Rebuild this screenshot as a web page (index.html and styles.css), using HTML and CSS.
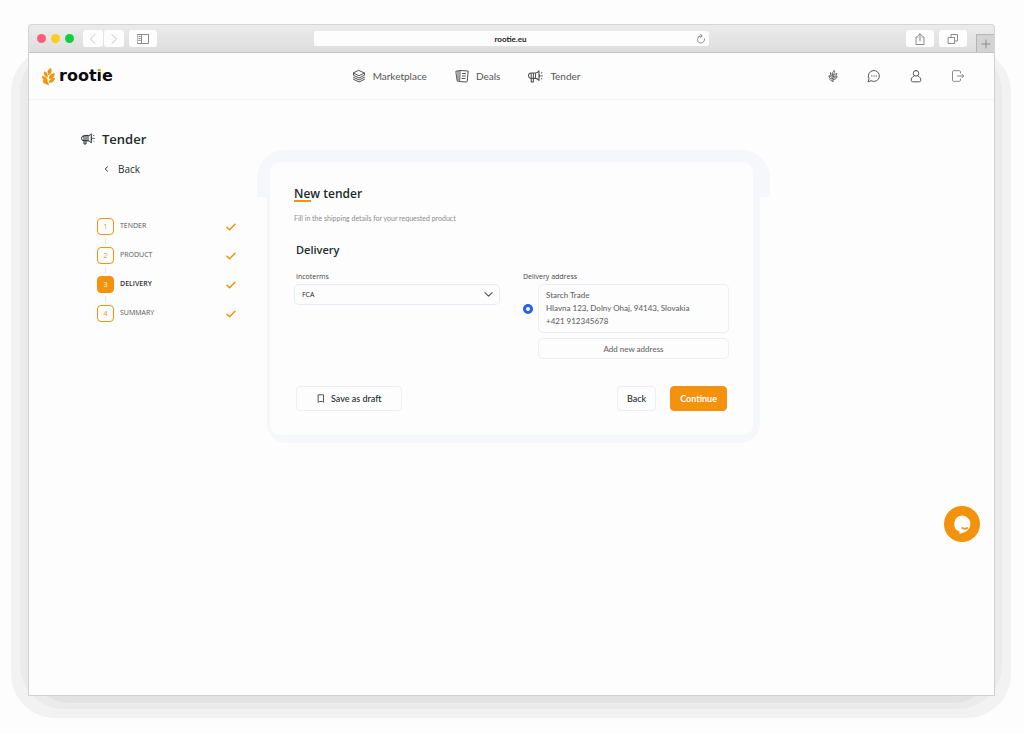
FILE: index.html
```html
<!DOCTYPE html>
<html lang="en">
<head>
<meta charset="utf-8">
<meta name="viewport" content="width=device-width, initial-scale=1">
<title>rootie – New tender</title>
<link rel="stylesheet" href="styles.css">
</head>
<body>
<svg class="defs" aria-hidden="true">
  <symbol id="megaphone" viewBox="0 0 28 24">
    <path d="M14 5.500v10H6a5 5 0 0 1 0-10zM6 5.500V22h4V5.500M14 5.500c3 0 5-2 6.500-4v18c-1.500-2-3.500-4-6.500-4M21 8.500a2.500 2.500 0 0 1 0 4.500M25 5.500l.5-.5M25.500 10.800h1M25 16l.5.500"/>
  </symbol>
  <symbol id="check" viewBox="0 0 10 8"><path d="M1 4.200l2.600 2.600L9 1.200"/></symbol>
</svg>
<div class="window">
  <div class="titlebar">
    <div class="tools">
      <span class="light red"></span><span class="light yellow"></span><span class="light green"></span>
      <div class="pair">
        <button class="tool" aria-label="Previous page"><svg class="pale" viewBox="0 0 12 12"><path d="M8 1.500L3.500 6 8 10.500"/></svg></button>
        <button class="tool" aria-label="Next page"><svg class="pale" viewBox="0 0 12 12"><path d="M4 1.500L8.500 6 4 10.500"/></svg></button>
      </div>
      <button class="tool wide" aria-label="Sidebar"><svg viewBox="0 0 12 12"><path d="M.5 1.500h11v9H.5zM4.500 1.500v9M1.800 3.500h1.400M1.800 5.500h1.400M1.800 7.500h1.400"/></svg></button>
    </div>
    <div class="url"><input type="text" value="rootie.eu" aria-label="Address" readonly><button class="reload" aria-label="Reload"><svg viewBox="0 0 12 12"><path d="M10.200 5.800A4.200 4.200 0 1 1 6 2.300h1M5.500.5L7.300 2.300 5.500 4.200"/></svg></button></div>
    <div class="tools end">
      <button class="tool wide" aria-label="Share"><svg viewBox="0 0 12 12"><path d="M4 4H2v7.500h8V4H8M6 8V.8M4 2.800l2-2 2 2"/></svg></button>
      <button class="tool wide" aria-label="Tabs"><svg viewBox="0 0 12 12"><path d="M1.500 4.500h6v6h-6zM4 4.500v-3h6.500V8h-3"/></svg></button>
      <button class="newtab" aria-label="New tab"><svg viewBox="0 0 12 12"><path d="M6 2v8M2 6h8"/></svg></button>
    </div>
  </div>

  <header class="header">
    <a class="logo" href="#">
      <svg viewBox="0 0 13 17"><path d="M8.800 0C5.300 1.500 4.800 4.500 6.600 7.200 9.800 5.500 10.300 2.500 8.800 0zM2.300 3.300C1.300 6.500 2.700 8.800 5.700 9.600 6.300 6.700 5 4.300 2.300 3.300zM12.800 5.300C9 5.300 6.900 7.400 6.900 11c3.800-.2 5.900-2.200 5.900-5.700zM0 8C0 11.200 2.100 13.300 5.700 13.500 5.600 10.200 3.500 8.200 0 8zM13 9.800C9.300 9.800 7.100 11.800 6.900 15c3.500 0 5.900-2 6.100-5.200zM.5 12.300c.5 2.800 2.900 4.500 6.500 4.700-.3-3.200-2.900-4.800-6.500-4.700z"/></svg>
      <span>root<span class="i">i</span>e</span>
    </a>
    <nav class="nav">
      <a href="#"><svg viewBox="0 0 14 14"><path d="M7 1.500l5.500 2.600L7 6.700 1.500 4.100zM1.500 4.100v2.200L7 9l5.500-2.700V4.100M1.500 8.300L7 11l5.500-2.700M1.500 10.300L7 13l5.500-2.700"/></svg>Marketplace</a>
      <a href="#"><svg viewBox="0 0 14 14"><path d="M5.500 1.500l7.700.5-1 10.500c0 .3-.3.500-.6.500l-6.300-.4c-.4 0-.6-.3-.6-.6zM5.500 1.500L.8 2.300l1.300 9.200c.1.600.4.900 1 .9h1.600M3 2v9.500M7.500 4.500h3M7.300 7h3M7 9.500h3"/></svg>Deals</a>
      <a href="#"><svg class="horn"><use href="#megaphone"/></svg>Tender</a>
    </nav>
    <div class="actions">
      <a href="#" aria-label="Crops"><svg class="crops" viewBox="0 0 14 14"><path d="M8.300 1C6 2.500 6 4 7 5.500 9 4 9 2.500 8.300 1zM4 3.500c-.5 2 .5 3.500 2.300 4C6.500 5.500 5.500 4.300 4 3.500zM11.300 4.500C9 4.500 7.500 6 7.500 8c2.500 0 3.600-1.300 3.800-3.500zM2.500 7c0 2.300 1.500 3.500 3.700 3.500C6 8.300 4.500 7 2.500 7zM11.500 8c-2.300 0-3.800 1.200-4 3 2.500 0 3.800-1 4-3zM3 10.500c.5 1.500 1.500 2.500 4 2.500M7 5v8.500"/></svg></a>
      <a href="#" aria-label="Messages"><svg viewBox="0 0 14 14"><path d="M1.200 12.500l.8-2.900a5.500 5.500 0 1 1 2.300 2.300zM4.500 7H5M6.800 7h.5M9.100 7h.5"/></svg></a>
      <a href="#" aria-label="Account"><svg viewBox="0 0 14 14"><path d="M7 1.500a2.800 2.800 0 1 1 0 5.600 2.800 2.800 0 1 1 0-5.600zM5 7C3.200 7.700 2.200 9.500 2.200 11.200c0 1.300.8 1.600 2 1.600h5.600c1.200 0 2-.3 2-1.600C11.800 9.500 10.800 7.700 9 7"/></svg></a>
      <a href="#" aria-label="Log out"><svg class="light-icon" viewBox="0 0 14 14"><path d="M9.500 4V2.700c0-.6-.4-1-1-1h-6c-.6 0-1 .4-1 1v8.600c0 .6.400 1 1 1h6c.6 0 1-.4 1-1V10M6.500 7h6M11 5.300L12.700 7 11 8.700"/></svg></a>
    </div>
  </header>

  <main class="main">
    <aside class="side">
      <h1><svg class="horn"><use href="#megaphone"/></svg>Tender</h1>
      <a class="back" href="#"><svg viewBox="0 0 6 8"><path d="M4.500 1.800L2.200 4l2.300 2.200"/></svg>Back</a>
      <ol class="steps">
        <li><span class="num">1</span><span class="name">TENDER</span><svg><use href="#check"/></svg></li>
        <li><span class="num">2</span><span class="name">PRODUCT</span><svg><use href="#check"/></svg></li>
        <li class="current"><span class="num">3</span><span class="name">DELIVERY</span><svg><use href="#check"/></svg></li>
        <li><span class="num">4</span><span class="name">SUMMARY</span><svg><use href="#check"/></svg></li>
      </ol>
    </aside>

    <form class="card">
      <h2>New tender</h2>
      <p class="hint">Fill in the shipping details for your requested product</p>
      <h3>Delivery</h3>
      <div class="fields">
        <div class="field">
          <label for="incoterms">Incoterms</label>
          <div class="select">
            <select id="incoterms"><option>FCA</option></select>
            <svg viewBox="0 0 8 6"><path d="M.8 1.300L4 4.500l3.200-3.200"/></svg>
          </div>
        </div>
        <fieldset class="field">
          <legend>Delivery address</legend>
          <div class="choice">
            <input type="radio" id="address" name="address" checked>
            <label class="address" for="address">Starch Trade<br>Hlavna 123, Dolny Ohaj, 94143, Slovakia<br>+421 912345678</label>
            <button class="add" type="button">Add new address</button>
          </div>
        </fieldset>
      </div>
      <div class="buttons">
        <button class="btn draft" type="button"><svg viewBox="0 0 8 9"><path d="M1.500 .8h5v7.400L5.500 7.500h-3L1.500 8.200z"/></svg>Save as draft</button>
        <button class="btn" type="button">Back</button>
        <button class="btn primary" type="submit">Continue</button>
      </div>
    </form>
  </main>

  <button class="chat" aria-label="Open chat"><svg viewBox="0 0 36 36"><path class="bubble" d="M18 9.500a8.500 8.500 0 0 1 3.500 16.200L15.500 28v-2.200A8.500 8.500 0 0 1 18 9.500z"/><path class="smile" d="M18.500 22c1.300.8 3.200.8 4.500 0"/></svg></button>
</div>
</body>
</html>
```
FILE: styles.css
```css
* { box-sizing: border-box; }

body {
  display: flex;
  min-height: 100vh;
  margin: 0;
  padding: 24px 29px 38px 28px;
  background: #fdfdfd;
  color: #222b2b;
  font-family: Lato, "Liberation Sans", sans-serif;
  font-size: 8px;
}

h1, h2, h3, p, ol, fieldset, legend { margin: 0; padding: 0; border: 0; }
a { color: inherit; text-decoration: none; }
button, input, select { margin: 0; padding: 0; border: 0; font: inherit; color: inherit; }
button { cursor: pointer; }
svg { display: block; flex: none; fill: none; stroke: currentColor; stroke-width: 1; stroke-linecap: round; stroke-linejoin: round; }
.defs { position: absolute; width: 0; height: 0; }

/* Browser window and its stepped shadow */
.window {
  position: relative;
  z-index: 0;
  display: flex;
  flex: 1;
  flex-direction: column;
  min-width: 0;
}
.window::before {
  content: "";
  position: absolute;
  z-index: -3;
  inset: 24px -16px -22px -17px;
  border-radius: 44px;
  background: #f2f2f2;
}
.window::after {
  content: "";
  position: absolute;
  z-index: -2;
  inset: 24px -7px -13px -8px;
  border-radius: 44px;
  background: #ebebeb;
}

.titlebar {
  display: grid;
  grid-template-columns: 1fr 41% 1fr;
  align-items: center;
  height: 29px;
  border: 1px solid #d5d5d5;
  border-bottom-color: #c4c4c4;
  border-radius: 4px 4px 0 0;
  background: linear-gradient(#ebebeb, #dedede);
}
.tools { display: flex; align-items: center; gap: 5px; height: 100%; padding-left: 8px; }
.light { width: 9px; height: 9px; border-radius: 50%; }
.red { background: #ff5f74; }
.yellow { background: #ffcb1f; }
.green { background: #10cf3c; }
.pair { display: flex; gap: 1px; padding-left: 4px; }
.tool { display: grid; place-items: center; width: 20px; height: 17px; border-radius: 3px; background: #fdfdfd; color: #8b8b8b; }
.tool.wide { width: 28px; }
.tool svg, .newtab svg { width: 12px; height: 12px; }
.tool .pale { color: #c4c4c4; }
.tools.end { justify-content: flex-end; }
.newtab { display: grid; place-items: center; align-self: flex-end; width: 18px; height: 18px; margin-left: 4px; border: 1px solid #b5b5b5; border-width: 1px 0 0 1px; background: #d3d3d3; color: #8b8b8b; }
.url { display: flex; align-items: center; height: 15px; padding: 0 3px 0 11px; border-radius: 2px; background: #fdfdfd; }
.url input { flex: 1; min-width: 0; background: none; color: #222; font-weight: bold; text-align: center; outline: 0; }
.reload { background: none; color: #777; }
.reload svg { width: 10px; height: 10px; }

.header {
  display: grid;
  grid-template-columns: 4fr auto 5fr;
  align-items: center;
  height: 47px;
  padding: 0 29px 1px 13px;
  border: 1px solid #d0d0d0;
  border-width: 0 1px;
  background: #fdfdfd;
  box-shadow: inset 0 -1px #f1f2f8;
  color: #555;
}
.logo { display: flex; align-items: center; gap: 4px; color: #0b0b0b; font: bold 16px/20px "DejaVu Sans", sans-serif; }
.logo svg { width: 13px; height: 17px; fill: #f3920d; stroke: none; }
.logo .i { background: linear-gradient(#f3920d 6px, #0b0b0b 6px); background-clip: text; -webkit-background-clip: text; color: transparent; }
.nav { display: flex; gap: 28px; padding-left: 2px; font-size: 10px; line-height: 14px; }
.nav a { display: flex; align-items: center; gap: 7px; }
.nav svg { width: 14px; height: 14px; }
.horn { stroke-width: 2; }
.nav .horn { width: 15px; height: 13px; }
.actions { display: flex; justify-content: flex-end; gap: 28px; }
.actions svg { width: 14px; height: 14px; }
.actions .crops { width: 12px; }
.actions .light-icon { color: #8b8b8b; }

/* Page content */
.main {
  position: relative;
  display: grid;
  flex: 1;
  grid-template-columns: 1fr minmax(0, 483px) 1fr;
  align-items: start;
  border: 1px solid #d0d0d0;
  border-top: 0;
  background: #fdfdfd;
  font-family: "Open Sans", "Noto Sans", sans-serif;
}
.main::before {
  content: "";
  position: absolute;
  z-index: -1;
  inset: auto 4px -8px 4px;
  height: 40px;
  border-radius: 0 0 36px 36px;
  background: #e3e3e3;
}
.side { padding: 29px 34px 0 52px; }
.side h1 { display: flex; align-items: center; gap: 7px; font-size: 13px; line-height: 20px; font-weight: 600; }
.side h1 svg { width: 14px; height: 12px; }
.back { display: flex; align-items: center; gap: 9px; padding: 10px 0 0 22px; font-size: 10px; line-height: 20px; font-weight: 500; }
.back svg { width: 6px; height: 8px; }
.steps { display: grid; gap: 12px; padding: 39px 0 0 16px; list-style: none; color: #555; font-size: 7px; line-height: 10px; }
.steps li { position: relative; display: flex; align-items: center; gap: 6px; height: 17px; }
.steps li + li::before { content: ""; position: absolute; left: 8px; top: -9px; width: 1px; height: 6px; background: #e3e6f0; }
.num { display: grid; place-items: center; width: 17px; height: 17px; border: 1px solid #f3920d; border-radius: 4px; color: #f3920d; }
.name { padding-bottom: 2px; }
.steps svg { width: 10px; height: 8px; margin-left: auto; color: #f3920d; stroke-width: 1.5; }
.current { color: #333; }
.current .name { font-weight: 600; }
.current .num { background: #f3920d; color: #fdfdfd; }

.card {
  position: relative;
  z-index: 0;
  margin-top: 62px;
  padding: 22px 24px 24px;
}
/* Raised tab behind the top edge, and the rim round the rest */
.card::before, .card::after { content: ""; position: absolute; z-index: -2; background: #f6f7fb; }
.card::before { inset: -12px -17px auto -13px; height: 47px; border-radius: 28px 28px 0 0; }
.card::after { inset: 20px -7px -8px -3px; border-radius: 0 0 20px 20px; }
.card h2::before { content: ""; position: absolute; z-index: -1; inset: 0; border-radius: 10px; background: #fdfdfd; }
.card h2 { font-size: 12px; line-height: 20px; font-weight: 600; background: linear-gradient(#f3920d, #f3920d) 0 16px / 17px 2px no-repeat; }
.hint { margin-top: 8px; color: #8b8b8b; font-family: Lato, sans-serif; font-size: 7px; line-height: 12px; }
.card h3 { margin-top: 16px; padding-left: 2px; font-size: 11px; line-height: 20px; font-weight: 600; }
.fields { display: grid; grid-template-columns: 1fr 1fr; gap: 23px; margin-top: 12px; }
.field { display: grid; align-content: start; gap: 2px; min-width: 0; color: #444; font-size: 7px; line-height: 10px; }
.field > label { padding-left: 2px; }
.select { position: relative; }
.select select { width: 100%; height: 21px; padding: 0 7px; border: 1px solid #e8ecf7; border-radius: 5px; background: #fdfdfd; color: #222; appearance: none; }
.select svg { position: absolute; right: 7px; top: 7px; width: 9px; height: 7px; color: #555; pointer-events: none; }
.choice { display: grid; grid-template-columns: 10px 1fr; align-items: center; gap: 5px; padding-top: 2px; font-family: Lato, sans-serif; font-size: 8px; }
.choice input { width: 10px; height: 10px; border: 3px solid #2563eb; border-radius: 50%; background: #fdfdfd; appearance: none; }
.address, .add { border: 1px solid #eceef8; border-radius: 5px; background: #fdfdfd; color: #666; font-weight: 500; }
.address { padding: 4px 7px; line-height: 13px; }
.add { grid-column: 2; height: 21px; }
.buttons { display: flex; gap: 14px; margin-top: 27px; padding: 0 2px; font-family: Lato, sans-serif; font-size: 9px; }
.btn { display: flex; align-items: center; justify-content: center; gap: 6px; height: 25px; padding: 0 9px; border: 1px solid #eceef8; border-radius: 4px; background: #fdfdfd; color: #222b2b; font-weight: 500; }
.draft { margin-right: auto; padding: 0 20px; }
.btn svg { width: 8px; height: 9px; color: #555; }
.primary { border-color: #f3920d; background: #f3920d; color: #fdfdfd; font-weight: bold; }

.chat { position: absolute; right: 15px; bottom: 154px; width: 36px; height: 36px; border-radius: 50%; background: #f3920d; }
.chat .bubble { fill: #fdfdfd; stroke: none; }
.chat .smile { stroke: #f3920d; stroke-width: 2; }
```
